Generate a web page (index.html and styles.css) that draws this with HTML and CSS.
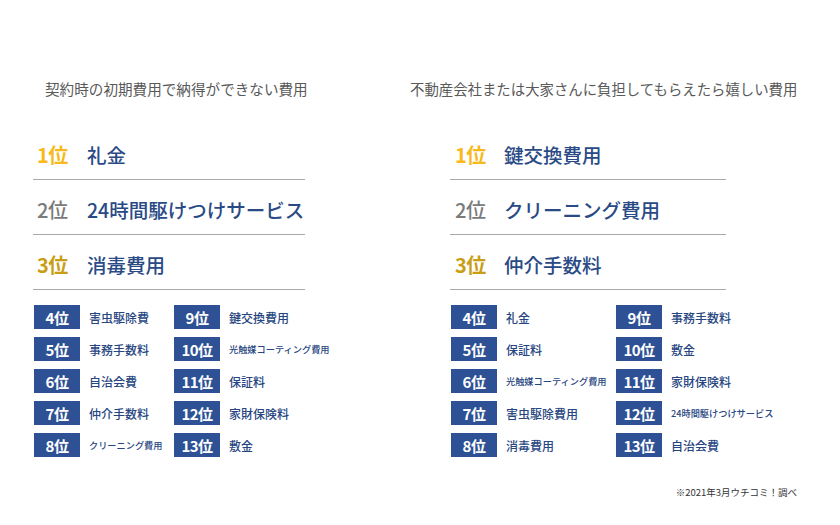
FILE: index.html
```html
<!DOCTYPE html>
<html lang="ja">
<head>
<meta charset="utf-8">
<link rel="stylesheet" href="styles.css">
</head>
<body>
<div class="page">
  <div class="cols">
    <section class="col col-left">
      <h2 class="title">契約時の初期費用で納得ができない費用</h2>
      <div class="top">
        <div class="top-row"><span class="rank r1">1位</span><span class="name">礼金</span></div>
        <div class="top-row"><span class="rank r2">2位</span><span class="name">24時間駆けつけサービス</span></div>
        <div class="top-row"><span class="rank r3">3位</span><span class="name">消毒費用</span></div>
      </div>
      <div class="list">
        <div class="item"><span class="badge">4位</span><span class="label">害虫駆除費</span></div>
        <div class="item"><span class="badge">9位</span><span class="label">鍵交換費用</span></div>
        <div class="item"><span class="badge">5位</span><span class="label">事務手数料</span></div>
        <div class="item"><span class="badge">10位</span><span class="label small">光触媒コーティング費用</span></div>
        <div class="item"><span class="badge">6位</span><span class="label">自治会費</span></div>
        <div class="item"><span class="badge">11位</span><span class="label">保証料</span></div>
        <div class="item"><span class="badge">7位</span><span class="label">仲介手数料</span></div>
        <div class="item"><span class="badge">12位</span><span class="label">家財保険料</span></div>
        <div class="item"><span class="badge">8位</span><span class="label small">クリーニング費用</span></div>
        <div class="item"><span class="badge">13位</span><span class="label">敷金</span></div>
      </div>
    </section>
    <section class="col col-right">
      <h2 class="title">不動産会社または大家さんに負担してもらえたら嬉しい費用</h2>
      <div class="top">
        <div class="top-row"><span class="rank r1">1位</span><span class="name">鍵交換費用</span></div>
        <div class="top-row"><span class="rank r2">2位</span><span class="name">クリーニング費用</span></div>
        <div class="top-row"><span class="rank r3">3位</span><span class="name">仲介手数料</span></div>
      </div>
      <div class="list">
        <div class="item"><span class="badge">4位</span><span class="label">礼金</span></div>
        <div class="item"><span class="badge">9位</span><span class="label">事務手数料</span></div>
        <div class="item"><span class="badge">5位</span><span class="label">保証料</span></div>
        <div class="item"><span class="badge">10位</span><span class="label">敷金</span></div>
        <div class="item"><span class="badge">6位</span><span class="label small">光触媒コーティング費用</span></div>
        <div class="item"><span class="badge">11位</span><span class="label">家財保険料</span></div>
        <div class="item"><span class="badge">7位</span><span class="label">害虫駆除費用</span></div>
        <div class="item"><span class="badge">12位</span><span class="label small">24時間駆けつけサービス</span></div>
        <div class="item"><span class="badge">8位</span><span class="label">消毒費用</span></div>
        <div class="item"><span class="badge">13位</span><span class="label">自治会費</span></div>
      </div>
    </section>
  </div>
  <p class="note">※2021年3月ウチコミ！調べ</p>
</div>
</body>
</html>
```

FILE: styles.css
```css
* { box-sizing: border-box; }
html, body { margin: 0; padding: 0; background: #ffffff; }
body {
  width: 840px;
  height: 525px;
  overflow: hidden;
  font-family: "Noto Sans CJK JP", "Noto Sans", sans-serif;
}
.page {
  padding: 79px 0 0 33px;
}
.cols {
  display: flex;
}
.col-left { width: 377px; }
.col-right { flex: 1; }

.title {
  margin: 0;
  font-size: 14.6px;
  line-height: 20px;
  font-weight: 400;
  color: #595959;
  white-space: nowrap;
}
.col-left .title { padding-left: 12px; }
.col-right .title { font-size: 14.4px; }

.top {
  margin-top: 26px;
  width: 272px;
}
.col-right .top { margin-left: 40px; width: 276px; }
.top-row {
  height: 55px;
  display: flex;
  align-items: center;
  padding: 4px 0 0 4px;
  border-bottom: 1.5px solid #a9a9a9;
  white-space: nowrap;
}
.col-right .top-row { padding-left: 5px; }
.rank {
  width: 50px;
  font-size: 20px;
  font-weight: 700;
  letter-spacing: -0.5px;
}
.col-right .rank { width: 49px; }
.r1 { color: #f7ba1a; }
.r2 { color: #7b7b7b; font-weight: 500; }
.r3 { color: #c99d14; }
.name {
  font-size: 19.5px;
  font-weight: 500;
  color: #2a4a85;
  letter-spacing: 0;
}

.list {
  margin: 15px 0 0 1px;
  display: grid;
  grid-template-columns: 140px 140px;
  row-gap: 8px;
}
.col-right .list {
  margin-left: 41px;
  grid-template-columns: 165px 165px;
}
.item {
  display: flex;
  align-items: center;
  gap: 9px;
  height: 24px;
  white-space: nowrap;
}
.badge {
  width: 46px;
  height: 24px;
  flex: none;
  background: #2d5194;
  color: #ffffff;
  font-size: 15px;
  font-weight: 700;
  display: flex;
  align-items: center;
  justify-content: center;
  letter-spacing: -0.5px;
}
.label {
  font-size: 12px;
  font-weight: 500;
  color: #27467f;
}
.label.small {
  font-size: 9.2px;
}

.note {
  margin: 29px 43px 0 0;
  text-align: right;
  font-size: 9.5px;
  line-height: 12px;
  color: #333333;
}
```
